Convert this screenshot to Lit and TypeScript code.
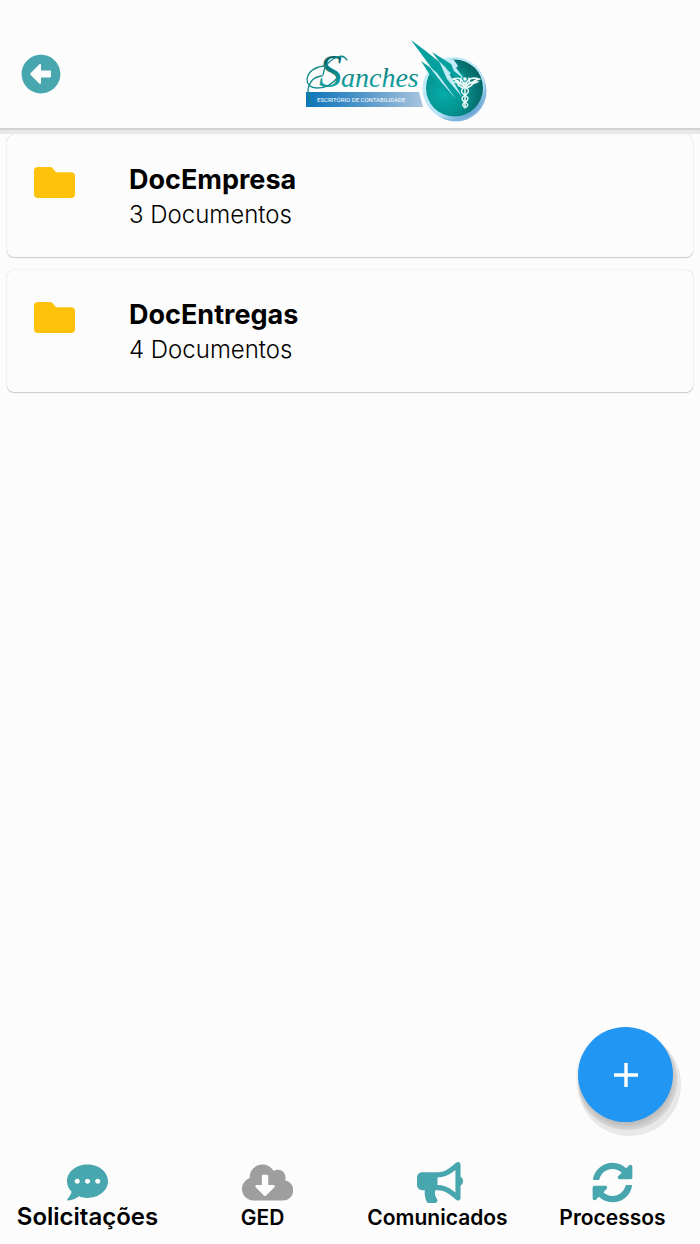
import { LitElement, html, css, svg } from "lit";
import { customElement, state } from "lit/decorators.js";

const ICONS = {
  back: {
    w: 512,
    d: "M256 504C119 504 8 393 8 256S119 8 256 8s248 111 248 248-111 248-248 248zm116-292H256v-70.9c0-10.7-13-16.1-20.5-8.5L121.2 247.5c-4.7 4.7-4.7 12.2 0 16.9l114.3 114.9c7.6 7.6 20.5 2.2 20.5-8.5V300h116c6.6 0 12-5.4 12-12v-64c0-6.6-5.4-12-12-12z",
  },
  comment: {
    w: 512,
    d: "M256 32C114.6 32 0 125.1 0 240c0 49.6 21.4 95 57 130.7C44.5 421.1 2.7 466 2.2 466.5c-2.2 2.3-2.8 5.7-1.5 8.7S4.8 480 8 480c66.3 0 116-31.8 140.6-51.4 32.7 12.3 69 19.4 107.4 19.4 141.4 0 256-93.1 256-208S397.4 32 256 32zM128 272c-17.7 0-32-14.3-32-32s14.3-32 32-32 32 14.3 32 32-14.3 32-32 32zm128 0c-17.7 0-32-14.3-32-32s14.3-32 32-32 32 14.3 32 32-14.3 32-32 32zm128 0c-17.7 0-32-14.3-32-32s14.3-32 32-32 32 14.3 32 32-14.3 32-32 32z",
  },
  cloud: {
    w: 640,
    d: "M537.6 226.6c4.1-10.7 6.4-22.4 6.4-34.6 0-53-43-96-96-96-19.7 0-38.1 6-53.3 16.2C367 64.2 315.3 32 256 32c-88.4 0-160 71.6-160 160 0 2.7.1 5.4.2 8.1C40.2 219.8 0 273.2 0 336c0 79.5 64.5 144 144 144h368c70.7 0 128-57.3 128-128 0-61.9-44-113.6-102.4-125.4zm-132.9 88.7L299.3 420.7c-6.2 6.2-16.4 6.2-22.6 0L171.3 315.3c-10.1-10.1-2.9-27.3 11.3-27.3H248V176c0-8.8 7.2-16 16-16h48c8.8 0 16 7.2 16 16v112h65.4c14.2 0 21.4 17.2 11.3 27.3z",
  },
  bullhorn: {
    w: 576,
    d: "M576 240c0-23.63-12.95-44.04-32-55.12V32.01C544 23.26 537.02 0 512 0c-7.12 0-14.19 2.38-19.98 7.02l-85.03 68.03C364.28 109.19 310.66 128 256 128H64c-35.35 0-64 28.65-64 64v96c0 35.35 28.65 64 64 64h33.7c-1.39 10.48-2.18 21.14-2.18 32 0 39.77 9.26 77.35 25.56 110.94 5.19 10.69 16.52 17.06 28.4 17.06h74.28c26.05 0 41.69-29.84 25.9-50.56-16.4-21.52-26.15-48.36-26.15-77.44 0-11.11 1.62-21.79 4.41-32H256c54.66 0 108.28 18.81 150.98 52.95l85.03 68.03a32.023 32.023 0 0 0 19.98 7.02c24.92 0 32-22.78 32-32V295.13C563.05 284.04 576 263.63 576 240zm-96 141.42l-33.05-26.44C392.95 311.78 325.12 288 256 288v-96c69.12 0 136.95-23.78 190.95-66.98L480 98.58v282.84z",
  },
  sync: {
    w: 512,
    d: "M370.72 133.28C339.458 104.008 298.888 87.962 255.848 88c-77.458.068-144.328 53.178-162.791 126.85-1.344 5.363-6.122 9.15-11.651 9.15H24.103c-7.498 0-13.194-6.807-11.807-14.176C33.933 94.924 134.813 8 256 8c66.448 0 126.791 26.136 171.315 68.685L463.03 40.97C478.149 25.851 504 36.559 504 57.941V192c0 13.255-10.745 24-24 24H345.941c-21.382 0-32.09-25.851-16.971-40.971l41.75-41.749zM32 296h134.059c21.382 0 32.09 25.851 16.971 40.971l-41.75 41.75c31.262 29.273 71.835 45.319 114.876 45.28 77.418-.07 144.315-53.144 162.787-126.849 1.344-5.363 6.122-9.15 11.651-9.15h57.304c7.498 0 13.194 6.807 11.807 14.176C478.067 417.076 377.187 504 256 504c-66.448 0-126.791-26.136-171.315-68.685L48.97 471.03C33.851 486.149 8 475.441 8 454.059V320c0-13.255 10.745-24 24-24z",
  },
};

type IconName = keyof typeof ICONS;

const icon = (name: IconName) => html`
  <svg class="icon" viewBox="0 0 ${ICONS[name].w} 512" aria-hidden="true">
    ${svg`<path fill="currentColor" d=${ICONS[name].d}></path>`}
  </svg>
`;

@customElement("brand-logo")
export class BrandLogo extends LitElement {
  static styles = css`
    :host {
      display: block;
      width: 182px;
      height: 84px;
    }
    .art {
      display: block;
      width: 100%;
      height: 100%;
      overflow: visible;
    }
    .script {
      font-family: "Liberation Serif", serif;
      font-style: italic;
      font-size: 28px;
    }
    .initial {
      font-size: 46px;
    }
    .tagline {
      font-family: Roboto, sans-serif;
      font-size: 6px;
    }
  `;

  render() {
    return html`
      <svg class="art" viewBox="305 40 182 84" role="img" aria-label="Sanches Escritório de Contabilidade">
        <defs>
          <linearGradient id="ink" x1="0" y1="0" x2="0" y2="1">
            <stop offset="0.25" stop-color="#0b6468" />
            <stop offset="0.8" stop-color="#12a5a3" />
          </linearGradient>
          <linearGradient id="band" x1="0" y1="0" x2="1" y2="0">
            <stop offset="0" stop-color="#0c74bb" />
            <stop offset="0.45" stop-color="#4c93c8" />
            <stop offset="1" stop-color="#a9c4de" />
          </linearGradient>
          <linearGradient id="rim" x1="0.2" y1="0.1" x2="0.85" y2="0.95">
            <stop offset="0" stop-color="#c3ecf8" />
            <stop offset="0.65" stop-color="#b5e3f5" />
            <stop offset="1" stop-color="#4f97d0" />
          </linearGradient>
          <radialGradient id="disc" cx="0.3" cy="0.6" r="0.75">
            <stop offset="0" stop-color="#05acaa" />
            <stop offset="0.5" stop-color="#04928f" />
            <stop offset="1" stop-color="#05605f" />
          </radialGradient>
        </defs>
        <path d="M306 92H419L423 107H306Z" fill="url(#band)" />
        <circle cx="456" cy="91" r="30.5" fill="#85b5dd" />
        <circle cx="454" cy="88.500" r="31.500" fill="url(#rim)" />
        <circle cx="454.500" cy="88" r="28.500" fill="url(#disc)" />
        <path d="M425 70L431 64L445 58L454 60L458 66L444 80Z" fill="#c3ecf8" />
        <path d="M411 40L427 52L443 65L462 92L466 97L452 90L433 70Z" fill="#06a09e" />
        <path d="M432 52L451 64L463 74L467 82L455 77L441 64Z" fill="#06a09e" />
        <path d="M421 61L438 73L455 98L446 92L430 75Z" fill="#06a09e" />
        <path d="M428 65L437 73L456 99L442 83Z" fill="#c3ecf8" />
        <path d="M439 61L446 68L462 97L447 79Z" fill="#c3ecf8" />
        <path d="M450 61L454 65L464 79L454 71Z" fill="#c3ecf8" />
        <g fill="none" stroke="#f2fcfb" stroke-linecap="round">
          <path d="M465 82V108" stroke-width="1.500" />
          <circle cx="465" cy="79" r="1.800" fill="#f2fcfb" stroke="none" />
          <path d="M464 84Q461 76 453 79L458 81M464 86Q459 81 455 82L460 84M463 88L458 85" stroke-width="1.600" />
          <path d="M466 84Q469 76 479 79L474 81M466 86Q471 81 477 82L472 84M467 88L472 85" stroke-width="1.600" />
          <path d="M461 78Q459 84 465 87Q472 91 465 95Q459 99 465 102Q470 105 466 107" stroke-width="1.400" />
          <path d="M469 78Q471 84 465 87Q458 91 465 95Q471 99 465 102Q461 105 464 107" stroke-width="1.400" />
        </g>
        <text class="script" y="87" fill="url(#ink)"><tspan class="initial" x="319">S</tspan><tspan x="341">anches</tspan></text>
        <path
          d="M347 60Q343 53 333 59Q324 65 323 75M324 66Q309 68 307 79Q307 88 317 88Q330 88 338 77M322 76Q310 77 308 90Q308 98 312 103"
          fill="none"
          stroke="#138b8c"
          stroke-width="1.300"
          stroke-linecap="round"
        />
        <text class="tagline" x="317" y="102" fill="#fff">ESCRITÓRIO DE CONTABILIDADE</text>
      </svg>
    `;
  }
}

@customElement("app-root")
export class AppRoot extends LitElement {
  @state() private folders = [
    { name: "DocEmpresa", count: 3 },
    { name: "DocEntregas", count: 4 },
  ];

  @state() private active = "GED";

  private tabs: { label: string; icon: IconName; large?: boolean }[] = [
    { label: "Solicitações", icon: "comment", large: true },
    { label: "GED", icon: "cloud" },
    { label: "Comunicados", icon: "bullhorn" },
    { label: "Processos", icon: "sync" },
  ];

  static styles = css`
    :host {
      display: flex;
      flex-direction: column;
      min-height: 100vh;
      background: #fcfcfc;
      color: #000;
      font-family: Inter, "Liberation Sans", sans-serif;
    }
    button {
      border: 0;
      padding: 0;
      background: none;
      color: inherit;
      font: inherit;
      cursor: pointer;
    }
    .header {
      display: grid;
      grid-template-columns: 92px 1fr;
      align-items: center;
      padding: 40px 0 4px;
      border-bottom: 2px solid #d2d2d2;
      box-shadow: 0 4px 0 #e8e8e8;
    }
    .back {
      justify-self: start;
      align-self: start;
      width: 40px;
      height: 40px;
      margin: 14px 0 0 21px;
      color: #48a7ae;
    }
    .logo {
      justify-self: center;
    }
    .icon {
      display: block;
      height: 100%;
    }
    .list {
      flex: 1;
      display: flex;
      flex-direction: column;
      gap: 13px;
      margin: 0;
      padding: 5px 7px 0;
      list-style: none;
    }
    .card {
      display: flex;
      align-items: flex-start;
      gap: 54px;
      width: 100%;
      box-sizing: border-box;
      padding: 28px 27px 25px;
      border-radius: 7px;
      background: #fcfcfc;
      box-shadow: 0 0 1px #bbb, 0 1px 1px #ccc;
      text-align: left;
    }
    .folder {
      width: 41px;
      height: 31px;
      margin-top: 4px;
      flex: none;
    }
    .name {
      display: block;
      font-size: 27px;
      line-height: 34px;
      font-weight: 700;
    }
    .count {
      display: block;
      font-size: 24px;
      line-height: 35px;
      font-weight: 350;
    }
    .dock {
      position: sticky;
      bottom: 0;
      background: #fcfcfc;
    }
    .add {
      position: absolute;
      right: 27px;
      bottom: 122px;
      display: grid;
      place-items: center;
      width: 95px;
      height: 95px;
      border-radius: 50%;
      background: #2196f3;
      color: #fff;
      box-shadow: 1px 4px 4px #bbb, 2px 6px 0 2px #d6d6d6, 4px 10px 0 4px #e8e8e8;
    }
    .plus {
      width: 24px;
      height: 24px;
    }
    .tabs {
      display: grid;
      grid-template-columns: repeat(4, 1fr);
      padding: 12px 0;
    }
    .tab {
      display: flex;
      flex-direction: column;
      align-items: center;
      height: 70px;
      color: #000;
      text-decoration: none;
      font-size: 21px;
      line-height: 30px;
      font-weight: 600;
    }
    .large {
      font-size: 24px;
      line-height: 28px;
    }
    .glyph {
      flex: none;
      width: 41px;
      height: 41px;
      color: #48a7ae;
    }
    .current {
      color: #9e9e9e;
    }
  `;

  render() {
    return html`
      <header class="header">
        <button class="back" aria-label="Voltar">${icon("back")}</button>
        <brand-logo class="logo"></brand-logo>
      </header>
      <ul class="list">
        ${this.folders.map(
          (f) => html`
            <li>
              <button class="card">
                <svg class="folder" viewBox="0 0 41 31" aria-hidden="true">
                  <path fill="#ffc20a" d="M4 0H16Q17.500 0 18.500 1L22 5.300H37Q41 5.300 41 9.300V27Q41 31 37 31H4Q0 31 0 27V4Q0 0 4 0Z" />
                </svg>
                <span>
                  <span class="name">${f.name}</span>
                  <span class="count">${f.count} Documentos</span>
                </span>
              </button>
            </li>
          `
        )}
      </ul>
      <div class="dock">
        <button class="add" aria-label="Adicionar">
          <svg class="plus" viewBox="0 0 24 24" aria-hidden="true">
            <path d="M12 0V24M0 12H24" stroke="currentColor" stroke-width="3.400" />
          </svg>
        </button>
        <nav class="tabs">
          ${this.tabs.map(
            (t) => html`
              <a class="tab ${t.large ? "large" : ""}" href="#" aria-current=${t.label === this.active ? "page" : "false"}>
                <span class="glyph ${t.label === this.active ? "current" : ""}">${icon(t.icon)}</span>
                <span>${t.label}</span>
              </a>
            `
          )}
        </nav>
      </div>
    `;
  }
}
